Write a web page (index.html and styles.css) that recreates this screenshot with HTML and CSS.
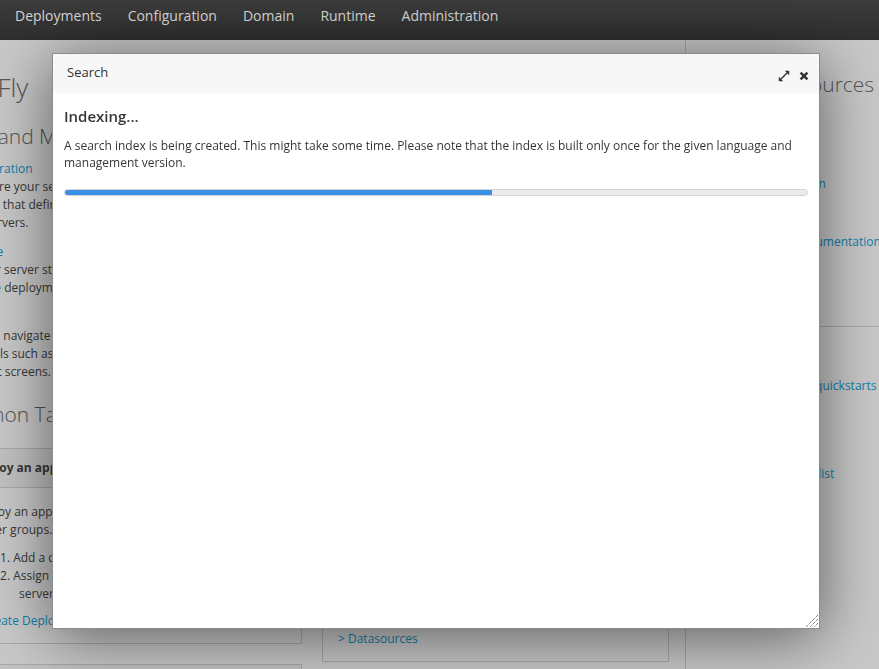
FILE: index.html
```html
<!DOCTYPE html>
<html lang="en">
<head>
<meta charset="utf-8">
<title>WildFly Management Console</title>
<link rel="stylesheet" href="styles.css">
</head>
<body>
<header class="navbar">
  <a href="#">Deployments</a>
  <a href="#">Configuration</a>
  <a href="#">Domain</a>
  <a href="#">Runtime</a>
  <a href="#">Administration</a>
</header>

<main class="page">
  <section class="col-left">
    <h1 class="title">WildFly</h1>
    <h2 class="section-title left-title build">Tools and Management</h2>
    <a class="block-link first-link" href="#">Configuration</a>
    <p class="text">Configure your server profiles, subsystems and other<br>settings that define the behavior of<br>your servers.</p>
    <a class="block-link second-link" href="#">Runtime</a>
    <p class="text">Monitor server status, manage server groups and<br>manage deployments.</p>
    <p class="text nav-text">You can navigate to the subsystems, interfaces and<br>protocols such as the socket bindings on the<br>relevant screens.</p>
    <h2 class="section-title left-title common">Common Tasks</h2>
    <div class="panel task-panel">
      <div class="panel-heading">Deploy an application</div>
      <div class="panel-body">
        <p class="text">Deploy an application and assign it to one or more server groups.</p>
        <ol class="steps">
          <li>Add a deployment to the content repository</li>
          <li>Assign the deployment to one or more of the server groups</li>
        </ol>
        <a class="block-link panel-link" href="#">&gt; Create Deployment</a>
      </div>
    </div>
    <div class="panel task-panel second">
      <div class="panel-heading">Create a datasource</div>
    </div>
  </section>

  <section class="col-mid">
    <div class="panel mid-panel">
      <div class="panel-heading">Configuration</div>
      <div class="panel-body">
        <a class="block-link" href="#">&gt; Profiles</a>
        <a class="block-link" href="#">&gt; Server Groups</a>
        <a class="block-link" href="#">&gt; Hosts</a>
        <a class="block-link" href="#">&gt; Subsystems</a>
        <a class="block-link" href="#">&gt; Interfaces</a>
        <a class="block-link" href="#">&gt; Socket Bindings</a>
        <a class="block-link" href="#">&gt; Paths</a>
        <a class="block-link" href="#">&gt; Datasources</a>
      </div>
    </div>
  </section>

  <aside class="col-right">
    <h2 class="section-title res-title">General Resources</h2>
    <ul class="links first-list">
      <li><a href="#">WildFly Home</a></li>
      <li><a href="#">Getting Started</a></li>
      <li><a href="#">WildFly Documentation</a></li>
      <li><a href="#">Admin Guide</a></li>
      <li><a href="#">CLI Guide</a></li>
      <li><a href="#">Model Reference Documentation</a></li>
      <li><a href="#">Issue Tracker</a></li>
    </ul>
    <hr class="divider">
    <h2 class="section-title help-title">Get Help</h2>
    <ul class="links help-list">
      <li><a href="#">Developer guide and quickstarts</a></li>
      <li><a href="#">Beginner's Guide</a></li>
      <li><a href="#">Latest News</a></li>
    </ul>
    <ul class="links help-list2">
      <li><a href="#">User Forums</a></li>
      <li><a href="#">Development mailing list</a></li>
    </ul>
  </aside>
</main>

<div class="backdrop"></div>

<div class="dialog" role="dialog" aria-label="Search">
  <div class="dialog-header">
    <span class="dialog-title">Search</span>
    <span class="dialog-tools">
      <svg class="icon" width="12" height="12" viewBox="0 0 12 12" aria-hidden="true">
        <path d="M6.8 0.8H11.2V5.2Z M0.8 6.8V11.2H5.2Z" fill="#333"/>
        <path d="M2.8 9.2L9.2 2.8" stroke="#333" stroke-width="1.4"/>
      </svg>
      <svg class="icon" width="10" height="10" viewBox="0 0 10 10" aria-hidden="true">
        <path d="M1.6 1.6L8.4 8.4M8.4 1.6L1.6 8.4" stroke="#333" stroke-width="2.5"/>
      </svg>
    </span>
  </div>
  <div class="dialog-body">
    <h3 class="indexing">Indexing...</h3>
    <p class="dialog-text">A search index is being created. This might take some time. Please note that the index is built only once for the given language and management version.</p>
    <div class="progress"><div class="progress-bar" style="width:57.5%"></div></div>
  </div>
  <svg class="resize" width="14" height="14" viewBox="0 0 14 14" aria-hidden="true">
    <path d="M13 1L1 13M13 5L5 13M13 9L9 13" stroke="#444" stroke-width="1" stroke-dasharray="1 1"/>
  </svg>
</div>
</body>
</html>
```

FILE: styles.css
```css
* { box-sizing: border-box; }
html, body { margin: 0; height: 100%; }
body {
  font-family: "Open Sans", "Liberation Sans", sans-serif;
  font-size: 12px;
  color: #363636;
  background: #fff;
  overflow: hidden;
}
h1, h2, h3, p, ol, ul { margin: 0; padding: 0; }
a { color: #0099d3; text-decoration: none; }

/* Navbar */
.navbar {
  position: relative;
  z-index: 20;
  height: 40px;
  display: flex;
  align-items: flex-start;
  padding-left: 2px;
  background: linear-gradient(#3c3c3c, #2f2f2f);
}
.navbar a {
  color: #d6d6d6;
  font-size: 14px;
  line-height: 32px;
  padding: 0 13px;
  white-space: nowrap;
}

/* Page */
.page {
  display: flex;
  height: 629px;
  overflow: hidden;
}
.col-left {
  flex: 0 0 359px;
  margin-left: -57px;
  padding-left: 13px;
}
.col-mid {
  flex: 0 0 347px;
  margin-left: 20px;
}
.col-right {
  flex: 1;
  margin-left: 16px;
  padding-left: 10px;
  border-left: 1px solid #d1d1d1;
  white-space: nowrap;
  overflow: hidden;
}

.title {
  margin-top: 32px;
  margin-left: -9px;
  font-size: 26px;
  line-height: 30px;
  font-weight: 300;
  color: #5e5e5e;
  white-space: nowrap;
}
.section-title {
  font-size: 21px;
  line-height: 26px;
  font-weight: 300;
  color: #5e5e5e;
  white-space: nowrap;
}
.left-title { margin-left: -14px; }
.build { margin-top: 21px; }
.common { margin-top: 20px; }
.block-link {
  display: block;
  line-height: 18px;
  white-space: nowrap;
}
.first-link, .second-link { margin-top: 11px; }
.text {
  line-height: 18px;
  white-space: nowrap;
}
.nav-text { margin-top: 30px; }

.panel {
  border: 1px solid #d1d1d1;
  background: #fff;
}
.panel-heading {
  height: 39px;
  line-height: 38px;
  padding: 0 15px;
  font-weight: 700;
  background: #f5f5f5;
  border-bottom: 1px solid #d1d1d1;
  white-space: nowrap;
}
.panel-body {
  padding: 15px 15px 13px;
}
.task-panel { margin-top: 21px; }
.task-panel .text { white-space: normal; }
.task-panel.second { margin-top: 20px; }

.steps {
  list-style: none;
  margin-top: 10px;
  padding-left: 28px;
  counter-reset: step;
}
.steps li {
  counter-increment: step;
  line-height: 18px;
  padding-left: 19px;
  text-indent: -19px;
}
.steps li::before {
  content: counter(step) ". ";
}
.panel-link { margin-top: 9px; }

.mid-panel { margin-top: 409px; }
.mid-panel .panel-body { padding: 15px 15px 13px; }

.res-title { margin-top: 31px; }
.links { list-style: none; }
.links li { line-height: 19.33px; }
.first-list { margin-top: 38px; }
.divider {
  margin: 56px 0 0 0;
  border: 0;
  border-top: 1px solid #d1d1d1;
  height: 0;
}
.help-title { margin-top: 17px; }
.help-list { margin-top: 6px; }
.help-list2 { margin-top: 10px; }

/* Backdrop and dialog */
.backdrop {
  position: fixed;
  inset: 0;
  background: rgba(60, 60, 60, 0.28);
  z-index: 10;
}
.dialog {
  position: fixed;
  left: 52px;
  top: 53px;
  width: 768px;
  height: 576px;
  z-index: 30;
  background: #fff;
  border: 1px solid #8c8c8c;
  box-shadow: 0 8px 60px rgba(0, 0, 0, 0.55);
  display: flex;
  flex-direction: column;
}
.dialog-header {
  height: 39px;
  flex: 0 0 39px;
  display: flex;
  align-items: center;
  justify-content: space-between;
  padding: 0 10px 3px 14px;
  background: #f7f7f7;
}
.dialog-title {
  font-size: 13px;
  color: #333;
}
.dialog-tools {
  display: flex;
  align-items: center;
  gap: 9px;
  padding-top: 7px;
}
.icon { display: block; }
.dialog-body {
  padding: 13px 11px 0;
}
.indexing {
  font-size: 15px;
  line-height: 20px;
  font-weight: 600;
  color: #363636;
}
.dialog-text {
  margin-top: 11px;
  line-height: 17.3px;
  color: #363636;
}
.progress {
  margin-top: 17px;
  height: 7px;
  background: #ebebeb;
  border: 1px solid #d4d4d4;
  border-radius: 4px;
  overflow: hidden;
}
.progress-bar {
  height: 100%;
  background: #3a8fe6;
}
.resize {
  position: absolute;
  right: 0;
  bottom: 0;
}
```
